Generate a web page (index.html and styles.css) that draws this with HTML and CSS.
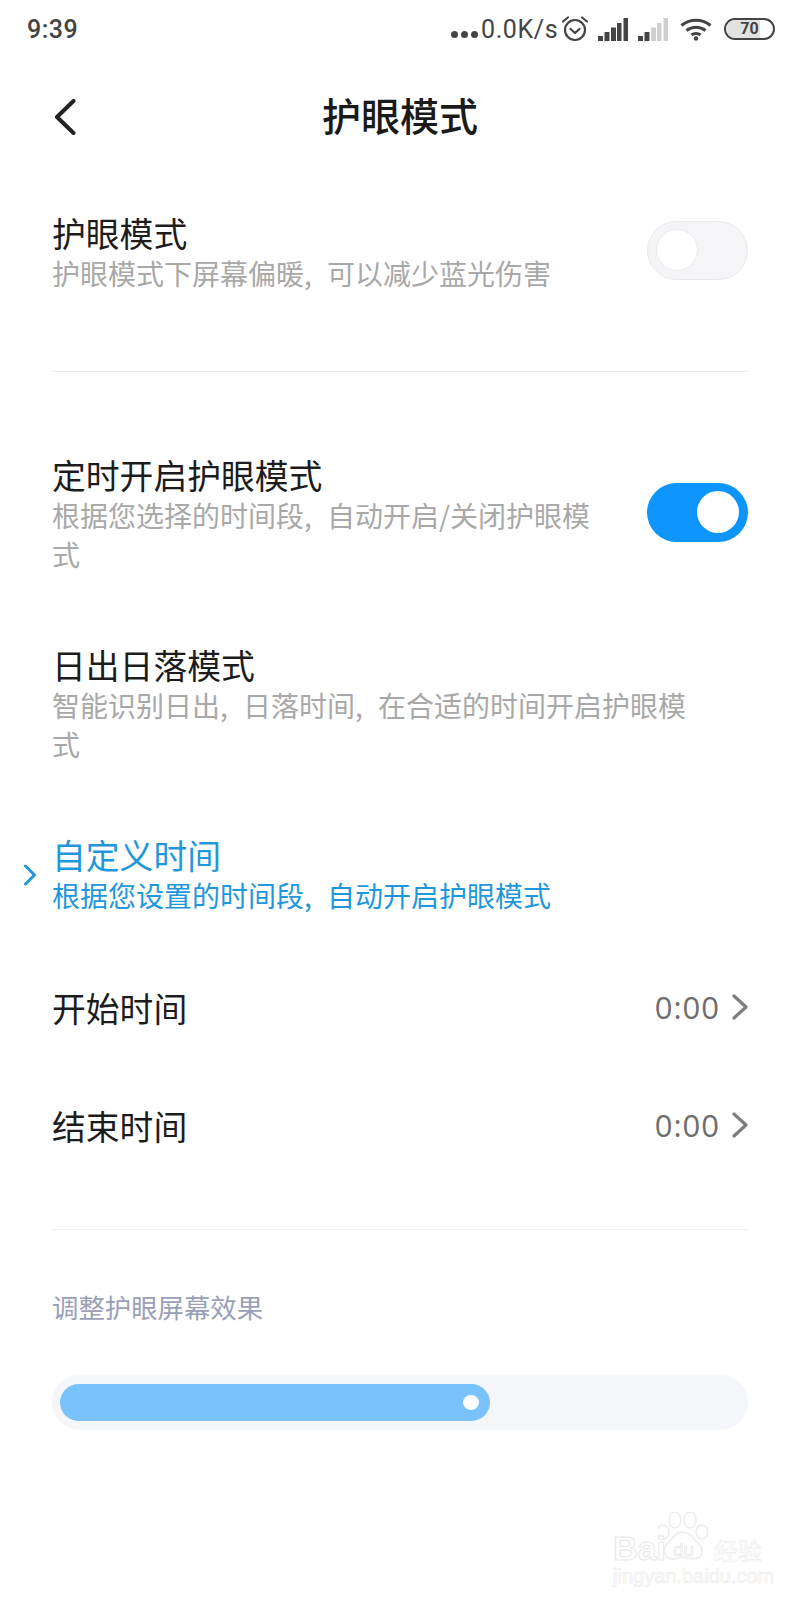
FILE: index.html
```html
<!DOCTYPE html>
<html lang="zh-CN">
<head>
<meta charset="utf-8">
<title>护眼模式</title>
<link rel="stylesheet" href="styles.css">
</head>
<body>
<div class="page">
  <header class="status">
    <span class="clock">9:39</span>
    <div class="status-right">
      <span class="dots"><i></i><i></i><i></i></span>
      <span class="speed">0.0K/s</span>
      <svg class="ic-alarm" width="28" height="27" viewBox="0 0 28 27" fill="none" stroke="#444" stroke-width="2.2" stroke-linecap="round" stroke-linejoin="round"><circle cx="14" cy="15" r="10"/><path d="M9.5 14l4.500 4 4.500-4"/><path d="M2 6.500l5-4M26 6.500l-5-4"/></svg>
      <svg class="ic-signal" width="30" height="23" viewBox="0 0 30 23" fill="#444"><rect x="0" y="18" width="5" height="5"/><rect x="6.500" y="14" width="5" height="9"/><rect x="13" y="9.500" width="5" height="13.500"/><rect x="19" y="5" width="4.500" height="18"/><rect x="25.500" y="0" width="4.500" height="23"/></svg>
      <svg class="ic-signal" width="30" height="23" viewBox="0 0 30 23" fill="#cfcfcf"><rect x="0" y="18" width="5" height="5" fill="#444"/><rect x="6.500" y="14" width="5" height="9" fill="#444"/><rect x="13" y="9.500" width="5" height="13.500"/><rect x="19" y="5" width="4.500" height="18"/><rect x="25.500" y="0" width="4.500" height="23"/></svg>
      <svg class="ic-wifi" width="32" height="23" viewBox="0 0 32 23" fill="none" stroke="#444" stroke-width="3"><path d="M1.500 7.500C9.500 0.500 22.500 0.500 30.500 7.500"/><path d="M6.500 12.500C12 8 20 8 25.500 12.500"/><path d="M11.500 17C14 15 18 15 20.500 17"/><circle cx="16" cy="20.500" r="2.200" fill="#444" stroke="none"/></svg>
      <span class="battery"><span class="battery-fill"></span><span class="battery-num">70</span></span>
    </div>
  </header>

  <nav class="nav">
    <svg class="back" width="22" height="36" viewBox="0 0 22 36" fill="none" stroke="#222" stroke-width="4" stroke-linecap="round" stroke-linejoin="round"><path d="M19.500 2L3 18l16.500 16"/></svg>
    <h1 class="nav-title">护眼模式</h1>
  </nav>

  <section class="row row-a">
    <div class="text">
      <div class="t">护眼模式</div>
      <div class="s">护眼模式下屏幕偏暖, 可以减少蓝光伤害</div>
    </div>
    <span class="toggle off"><span class="knob"></span></span>
  </section>

  <hr class="rule rule-a">

  <section class="row row-b">
    <div class="text with-toggle">
      <div class="t">定时开启护眼模式</div>
      <div class="s">根据您选择的时间段, 自动开启/关闭护眼模式</div>
    </div>
    <span class="toggle on"><span class="knob"></span></span>
  </section>

  <section class="row row-c">
    <div class="text wide">
      <div class="t">日出日落模式</div>
      <div class="s">智能识别日出, 日落时间, 在合适的时间开启护眼模式</div>
    </div>
  </section>

  <section class="row row-d selected">
    <svg class="sel-mark" width="14" height="22" viewBox="0 0 14 22" fill="none" stroke="#1f97dc" stroke-width="3" stroke-linecap="round" stroke-linejoin="round"><path d="M2.500 2l9 9-9 9"/></svg>
    <div class="text">
      <div class="t">自定义时间</div>
      <div class="s">根据您设置的时间段, 自动开启护眼模式</div>
    </div>
  </section>

  <section class="row line">
    <div class="t">开始时间</div>
    <div class="val"><span>0:00</span><svg width="16" height="26" viewBox="0 0 16 26" fill="none" stroke="#7d7d7d" stroke-width="3.200" stroke-linecap="round" stroke-linejoin="round"><path d="M2 2l12 11L2 24"/></svg></div>
  </section>
  <section class="row line">
    <div class="t">结束时间</div>
    <div class="val"><span>0:00</span><svg width="16" height="26" viewBox="0 0 16 26" fill="none" stroke="#7d7d7d" stroke-width="3.200" stroke-linecap="round" stroke-linejoin="round"><path d="M2 2l12 11L2 24"/></svg></div>
  </section>

  <hr class="rule rule-b">

  <div class="label">调整护眼屏幕效果</div>

  <div class="slider">
    <div class="slider-fill"><span class="slider-dot"></span></div>
  </div>

  <div class="watermark">
    <svg class="wm-paw" width="60" height="50" viewBox="0 0 60 50" fill="none" stroke="#ececec" stroke-width="1.500"><ellipse cx="5" cy="20" rx="6" ry="7"/><ellipse cx="17" cy="8" rx="6" ry="8"/><ellipse cx="32" cy="8" rx="6" ry="8"/><ellipse cx="44" cy="20" rx="6" ry="7"/><path d="M24 20c-7 0-9 7-15 12-6 6-2 16 7 15 5 0 6-2 9-2s5 2 10 2c9 0 12-9 6-15-6-5-9-12-17-12z"/></svg>
    <span class="wm-bai">Bai</span><span class="wm-du">du</span><span class="wm-jy">经验</span>
    <span class="wm-url">jingyan.baidu.com</span>
  </div>
</div>
</body>
</html>
```

FILE: styles.css
```css
* { box-sizing: border-box; }
html, body { margin: 0; padding: 0; background: #fff; }
body { font-family: "Noto Sans CJK SC", "Noto Sans", sans-serif; }
.page { position: relative; width: 800px; height: 1600px; overflow: hidden; }

/* status bar */
.status { height: 58px; padding: 0 25px 0 27px; display: flex; align-items: center; justify-content: space-between; color: #444; }
.clock { font: 500 25px/1 Roboto, sans-serif; letter-spacing: .5px; }
.status-right { display: flex; align-items: center; }
.dots { display: flex; gap: 3px; margin-top: 10px; margin-right: 3px; }
.dots i { width: 7px; height: 7px; border-radius: 50%; background: #444; display: block; }
.speed { font: 400 25px/1 Roboto, sans-serif; letter-spacing: .6px; width: 75px; margin-right: 5px; }
.ic-alarm { margin-right: 9px; margin-bottom: 1px; }
.ic-signal { margin-right: 10px; }
.ic-wifi { margin-left: 2px; margin-right: 12px; }
.battery { position: relative; width: 51px; height: 22px; border: 2.500px solid #444; border-radius: 11px; display: flex; align-items: center; justify-content: center; overflow: hidden; }
.battery-fill { position: absolute; left: 0; top: 0; bottom: 0; width: 72%; background: #e2e2e2; }
.battery-num { position: relative; font: 700 16px/1 Roboto, sans-serif; color: #444; }

/* nav */
.nav { height: 118px; position: relative; display: flex; align-items: flex-start; justify-content: center; }
.back { position: absolute; left: 54px; top: 41px; }
.nav-title { margin: 0; font-size: 39px; line-height: 112px; font-weight: 500; color: #1a1a1a; }

/* rows */
.row { display: flex; justify-content: space-between; margin: 0 52px; position: relative; }
.t { font-size: 33.800px; line-height: 43px; color: #1c1c1c; }
.s { font-size: 28px; line-height: 38.500px; color: #a8a8a8; word-spacing: 9px; }
.text { display: flex; flex-direction: column; }
.with-toggle { width: 550px; }
.wide { width: 650px; }
.row-a { margin-top: 35px; height: 160px; }
.row-a .toggle { margin-top: 10px; }
.row-b { height: 190px; }
.row-b .toggle { margin-top: 30px; }
.row-c { height: 190px; }
.selected .t, .selected .s { color: #1f97dc; }
.row-d { height: 115px; }

.toggle { position: relative; width: 101px; height: 59px; border-radius: 30px; display: block; flex: none; }
.toggle .knob { position: absolute; top: 8px; width: 42px; height: 42px; border-radius: 50%; background: #fff; }
.toggle.off { background: #f5f4f6; border: 1px solid #e9e8eb; }
.toggle.off .knob { left: 8px; top: 7px; border: 1px solid #ebeaed; }
.toggle.on { background: #0d95fb; }
.toggle.on .knob { right: 9px; }

.sel-mark { position: absolute; left: -29px; top: 31px; }

.line { height: 118px; align-items: center; }
.val { display: flex; align-items: center; gap: 12px; color: #6e6e6e; font: 400 31px/1 "Open Sans", sans-serif; letter-spacing: 1px; }

.rule { border: 0; height: 1px; background: #e9e9e9; margin: 0 52px; }
.rule-a { margin-bottom: 81px; }
.rule-b { margin-top: 45px; background: #efefef; }

.label { margin: 59px 0 0 52px; font-size: 26.400px; line-height: 36px; color: #9a9fb8; }

.slider { margin: 50px 52px 0; height: 55px; border-radius: 28px; background: #f4f6f9; padding: 9px 8px; }
.slider-fill { position: relative; width: 430px; height: 37px; border-radius: 19px; background: #79c2fc; }
.slider-dot { position: absolute; right: 11px; top: 11px; width: 16px; height: 15px; border-radius: 50%; background: #fff; }

/* watermark */
.watermark { position: absolute; left: 610px; top: 1510px; width: 160px; height: 76px; }
.wm-paw { position: absolute; left: 48px; top: 2px; }
.wm-bai { position: absolute; left: 3px; top: 18px; font: 700 34px/1.200 "Liberation Sans", sans-serif; color: #fff; -webkit-text-stroke: 1px #e8e8e8; }
.wm-du { position: absolute; left: 63px; top: 29px; font: 400 19px/1.200 "Liberation Sans", sans-serif; color: #fff; -webkit-text-stroke: .7px #e6e6e6; }
.wm-jy { position: absolute; left: 104px; top: 26px; font-size: 24px; line-height: 1.200; color: #fff; -webkit-text-stroke: .6px #ececec; }
.wm-url { position: absolute; left: 3px; top: 54px; font: 400 20px/1.200 "Liberation Sans", sans-serif; color: #fff; -webkit-text-stroke: .7px #ebebeb; white-space: nowrap; }
```
